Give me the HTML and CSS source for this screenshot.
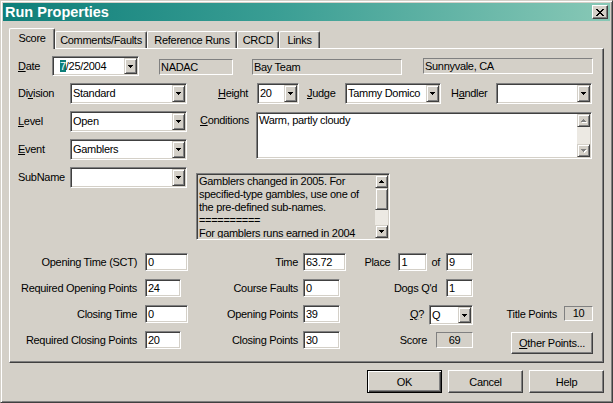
FILE: index.html
```html
<!DOCTYPE html>
<html>
<head>
<meta charset="utf-8">
<title>Run Properties</title>
<link rel="stylesheet" href="styles.css">
</head>
<body>
<div class="window">
  <div class="titlebar">
    <span class="title">Run Properties</span>
    <span class="close"><svg width="8" height="7" shape-rendering="crispEdges"><path d="M0 0h2v1H0zM6 0h2v1H6zM1 1h2v1H1zM5 1h2v1H5zM2 2h4v1H2zM3 3h2v1H3zM2 4h4v1H2zM1 5h2v1H1zM5 5h2v1H5zM0 6h2v1H0zM6 6h2v1H6z"/></svg></span>
  </div>
  <div class="client">
    <div class="tabs">
      <div class="tab active t-score">Score</div>
      <div class="tab t-com">Comments/Faults</div>
      <div class="tab t-ref">Reference Runs</div>
      <div class="tab t-crcd">CRCD</div>
      <div class="tab t-links">Links</div>
    </div>
    <div class="panel">
      <div class="daterow">
        <span class="dlabel"><u>D</u>ate</span>
        <div class="combo h20 w87">
          <span class="ctext dtext"><span class="sel">7</span>/25/2004</span>
          <span class="dd"><svg width="5" height="3" shape-rendering="crispEdges"><path d="M0 0h5v1H0zM1 1h3v1H1zM2 2h1v1H2z"/></svg></span>
        </div>
        <span class="static s-nadac">NADAC</span>
        <span class="static s-club">Bay Team</span>
        <span class="static s-loc">Sunnyvale, CA</span>
      </div>

      <div class="upper">
        <div class="leftcol">
          <div class="frow">
            <span class="flabel">Di<u>v</u>ision</span>
            <div class="combo w117">
              <span class="ctext">Standard</span>
              <span class="dd"><svg width="5" height="3" shape-rendering="crispEdges"><path d="M0 0h5v1H0zM1 1h3v1H1zM2 2h1v1H2z"/></svg></span>
            </div>
          </div>
          <div class="frow">
            <span class="flabel"><u>L</u>evel</span>
            <div class="combo w117">
              <span class="ctext">Open</span>
              <span class="dd"><svg width="5" height="3" shape-rendering="crispEdges"><path d="M0 0h5v1H0zM1 1h3v1H1zM2 2h1v1H2z"/></svg></span>
            </div>
          </div>
          <div class="frow">
            <span class="flabel"><u>E</u>vent</span>
            <div class="combo w117">
              <span class="ctext">Gamblers</span>
              <span class="dd"><svg width="5" height="3" shape-rendering="crispEdges"><path d="M0 0h5v1H0zM1 1h3v1H1zM2 2h1v1H2z"/></svg></span>
            </div>
          </div>
          <div class="frow">
            <span class="flabel">SubName</span>
            <div class="combo w117">
              <span class="ctext"></span>
              <span class="dd"><svg width="5" height="3" shape-rendering="crispEdges"><path d="M0 0h5v1H0zM1 1h3v1H1zM2 2h1v1H2z"/></svg></span>
            </div>
          </div>
        </div>

        <div class="rightcol">
          <div class="hrow">
            <span class="hl-height"><u>H</u>eight</span>
            <div class="combo w42">
              <span class="ctext">20</span>
              <span class="dd"><svg width="5" height="3" shape-rendering="crispEdges"><path d="M0 0h5v1H0zM1 1h3v1H1zM2 2h1v1H2z"/></svg></span>
            </div>
            <span class="hl-judge"><u>J</u>udge</span>
            <div class="combo w96">
              <span class="ctext">Tammy Domico</span>
              <span class="dd"><svg width="5" height="3" shape-rendering="crispEdges"><path d="M0 0h5v1H0zM1 1h3v1H1zM2 2h1v1H2z"/></svg></span>
            </div>
            <span class="hl-handler">H<u>a</u>ndler</span>
            <div class="combo w96">
              <span class="ctext"></span>
              <span class="dd"><svg width="5" height="3" shape-rendering="crispEdges"><path d="M0 0h5v1H0zM1 1h3v1H1zM2 2h1v1H2z"/></svg></span>
            </div>
          </div>
          <div class="crow">
            <span class="clabel"><u>C</u>onditions</span>
            <div class="memo cond">
              <div class="mtext">Warm, partly cloudy</div>
              <div class="sb">
                <span class="sbbtn"><svg width="6" height="4" shape-rendering="crispEdges"><path fill="#fff" d="M3 1h1v1H3zM2 2h3v1H2zM1 3h5v1H1z"/><path fill="#808080" d="M2 0h1v1H2zM1 1h3v1H1zM0 2h5v1H0z"/></svg></span>
                <span class="track"></span>
                <span class="sbbtn"><svg width="6" height="4" shape-rendering="crispEdges"><path fill="#fff" d="M1 1h5v1H1zM2 2h3v1H2zM3 3h1v1H3z"/><path fill="#808080" d="M0 0h5v1H0zM1 1h3v1H1zM2 2h1v1H2z"/></svg></span>
              </div>
            </div>
          </div>
          <div class="memo notes">
            <div class="mtext ntext">Gamblers changed in 2005. For<br>specified-type gambles, use one of<br>the pre-defined sub-names.<br>==========<br>For gamblers runs earned in 2004</div>
            <div class="sb">
              <span class="sbbtn"><svg width="5" height="3" shape-rendering="crispEdges"><path d="M2 0h1v1H2zM1 1h3v1H1zM0 2h5v1H0z"/></svg></span>
              <span class="thumb"></span>
              <span class="track"></span>
              <span class="sbbtn"><svg width="5" height="3" shape-rendering="crispEdges"><path d="M0 0h5v1H0zM1 1h3v1H1zM2 2h1v1H2z"/></svg></span>
            </div>
          </div>
        </div>
      </div>

      <div class="lower">
        <div class="lrow">
          <span class="l1">Opening Time (SCT)</span>
          <span class="c1"><span class="edit w43">0</span></span>
          <span class="l2">Time</span>
          <span class="c2"><span class="edit w43">63.72</span></span>
          <span class="cl"><span class="lab">Place</span><span class="edit w29 ml8">1</span><span class="lab ml4">of</span><span class="edit w27 ml6">9</span></span>
          <span class="tl"></span>
        </div>
        <div class="lrow">
          <span class="l1">Required Opening Points</span>
          <span class="c1"><span class="edit w36">24</span></span>
          <span class="l2">Course Faults</span>
          <span class="c2"><span class="edit w37">0</span></span>
          <span class="cl"><span class="lab">Dogs Q'd</span><span class="edit w27 ml9">1</span></span>
          <span class="tl"></span>
        </div>
        <div class="lrow">
          <span class="l1">Closing Time</span>
          <span class="c1"><span class="edit w43">0</span></span>
          <span class="l2">Opening Points</span>
          <span class="c2"><span class="edit w37">39</span></span>
          <span class="cl"><span class="lab"><u>Q</u>?</span>
            <div class="combo h20 w44 ml5">
              <span class="ctext">Q</span>
              <span class="dd"><svg width="5" height="3" shape-rendering="crispEdges"><path d="M0 0h5v1H0zM1 1h3v1H1zM2 2h1v1H2z"/></svg></span>
            </div>
          </span>
          <span class="tl"><span class="lab">Title Points</span><span class="static num s-title ml7">10</span></span>
        </div>
        <div class="lrow">
          <span class="l1">Required Closing Points</span>
          <span class="c1"><span class="edit w36">20</span></span>
          <span class="l2">Closing Points</span>
          <span class="c2"><span class="edit w37">30</span></span>
          <span class="cl"><span class="lab">Score</span><span class="static num s-score ml9">69</span></span>
          <span class="tl"><span class="btn b-other"><u>O</u>ther Points...</span></span>
        </div>
      </div>
    </div>
    <div class="buttons">
      <span class="btn default">OK</span>
      <span class="btn">Cancel</span>
      <span class="btn">Help</span>
    </div>
  </div>
</div>
</body>
</html>
```

FILE: styles.css
```css
* { box-sizing: border-box; }
html, body { margin: 0; padding: 0; }
body {
  width: 613px;
  height: 403px;
  overflow: hidden;
  background: #d4d0c8;
  font-family: "Liberation Sans", Arial, sans-serif;
  font-size: 11px;
  letter-spacing: -0.3px;
  color: #000;
}
u { text-decoration: underline; text-underline-offset: 1px; }

.window {
  width: 613px;
  height: 403px;
  background: #d4d0c8;
  border: 1px solid;
  border-color: #d4d0c8 #404040 #404040 #d4d0c8;
  box-shadow: inset 1px 1px #fff, inset -1px -1px #808080;
  padding: 2px;
}

.titlebar {
  height: 18px;
  display: flex;
  align-items: center;
  justify-content: space-between;
  padding: 0 2px;
  background: linear-gradient(to right, #0e7e79 0%, #3a9e94 45%, #88c8b6 100%);
}
.title {
  color: #fff;
  font-weight: bold;
  font-size: 14.5px;
  letter-spacing: 0;
  line-height: 18px;
}
.close {
  width: 16px;
  height: 14px;
  background: #d4d0c8;
  border: 1px solid;
  border-color: #fff #404040 #404040 #fff;
  box-shadow: inset -1px -1px #808080;
  display: flex;
  align-items: center;
  justify-content: center;
}

.client { padding: 7px 6px 0 6px; }

.tabs {
  height: 20px;
  display: flex;
  align-items: flex-end;
  position: relative;
  z-index: 2;
}
.tab {
  height: 17px;
  background: #d4d0c8;
  border-top: 1px solid #fff;
  border-left: 1px solid #fff;
  border-right: 1px solid #404040;
  box-shadow: inset -1px 0 #808080;
  border-radius: 2px 2px 0 0;
  padding-top: 2px;
  line-height: 13px;
  text-align: center;
  white-space: nowrap;
}
.tab.active {
  height: 21px;
  margin-bottom: -1px;
  padding-top: 3px;
}
.t-score { width: 46px; }
.t-com { width: 92px; }
.t-ref { width: 90px; }
.t-crcd { width: 42px; }
.t-links { width: 41px; }

.panel {
  height: 315px;
  border: 1px solid;
  border-color: #fff #404040 #404040 #fff;
  box-shadow: inset -1px -1px #808080;
  padding: 7px 8px 0 8px;
}

/* controls */
.combo {
  display: flex;
  height: 21px;
  border: 1px solid;
  border-color: #808080 #fff #fff #808080;
  box-shadow: inset 1px 1px #404040, inset -1px -1px #d4d0c8;
  background: #fff;
  padding: 1px;
}
.combo.h20 { height: 20px; }
.ctext {
  flex: 1;
  padding-left: 1px;
  line-height: 17px;
  white-space: nowrap;
  overflow: hidden;
}
.h20 .ctext { line-height: 16px; }
.dtext { padding-left: 6px; }
.sel { background: #0e7e79; color: #fff; }
.dd {
  width: 13px;
  height: 100%;
  background: #d4d0c8;
  border: 1px solid;
  border-color: #d4d0c8 #404040 #404040 #d4d0c8;
  box-shadow: inset 1px 1px #fff, inset -1px -1px #808080;
  display: flex;
  align-items: center;
  justify-content: center;
}
.w87 { width: 87px; }
.w117 { width: 117px; }
.w42 { width: 42px; }
.w96 { width: 96px; }
.w44 { width: 44px; }

.static {
  display: block;
  height: 16px;
  border: 1px solid;
  border-color: #808080 #fff #fff #808080;
  padding-left: 1px;
  line-height: 14px;
  white-space: nowrap;
}
.static.num { text-align: center; padding-left: 0; }

.edit {
  display: block;
  height: 18px;
  border: 1px solid;
  border-color: #808080 #fff #fff #808080;
  box-shadow: inset 1px 1px #404040, inset -1px -1px #d4d0c8;
  background: #fff;
  padding: 0 2px;
  line-height: 16px;
  white-space: nowrap;
}
.w43 { width: 43px; }
.w36 { width: 36px; }
.w37 { width: 37px; }
.w29 { width: 29px; }
.w27 { width: 27px; }

.ml4 { margin-left: 4px; }
.ml5 { margin-left: 5px; }
.ml6 { margin-left: 6px; }
.ml7 { margin-left: 7px; }
.ml8 { margin-left: 8px; }
.ml9 { margin-left: 9px; }

/* date row */
.daterow {
  display: flex;
  align-items: flex-start;
  height: 20px;
}
.dlabel { width: 34px; line-height: 20px; }
.s-nadac { width: 74px; margin: 3px 0 0 20px; }
.s-club { width: 150px; margin: 3px 0 0 19px; }
.s-loc { width: 170px; margin: 2px 0 0 21px; }

/* upper */
.upper {
  display: flex;
  margin-top: 7px;
  height: 157px;
}
.leftcol {
  width: 169px;
  display: flex;
  flex-direction: column;
  gap: 7px;
}
.frow { display: flex; }
.flabel { width: 52px; line-height: 21px; }

.rightcol {
  width: 396px;
  margin-left: 9px;
}
.hrow { display: flex; height: 21px; }
.hl-height { width: 61px; text-align: right; padding-right: 9px; line-height: 21px; }
.hl-judge { width: 46px; padding-left: 8px; line-height: 21px; }
.hl-handler { width: 55px; padding-left: 10px; line-height: 21px; }

.crow { display: flex; margin-top: 8px; }
.clabel { width: 60px; padding-left: 4px; line-height: 13px; padding-top: 2px; }

.memo {
  display: flex;
  border: 1px solid;
  border-color: #808080 #fff #fff #808080;
  box-shadow: inset 1px 1px #404040, inset -1px -1px #d4d0c8;
  padding: 1px;
  overflow: hidden;
}
.cond { width: 336px; height: 47px; background: #fff; }
.notes { width: 194px; height: 67px; margin-top: 14px; background: #d4d0c8; }
.mtext {
  flex: 1;
  padding-left: 1px;
  line-height: 13px;
  overflow: hidden;
  white-space: nowrap;
}
.ntext { padding-left: 1px; }
.sb {
  width: 13px;
  display: flex;
  flex-direction: column;
}
.sbbtn, .thumb {
  display: flex;
  align-items: center;
  justify-content: center;
  width: 13px;
  height: 13px;
  background: #d4d0c8;
  border: 1px solid;
  border-color: #d4d0c8 #404040 #404040 #d4d0c8;
  box-shadow: inset 1px 1px #fff, inset -1px -1px #808080;
  flex: none;
}
.thumb { height: 22px; }
.track {
  flex: 1;
  background: #ece9e3;
}

/* lower */
.lower { margin-top: 13px; }
.lrow {
  display: flex;
  align-items: flex-start;
  height: 26px;
}
.l1 { width: 127px; text-align: right; padding-right: 8px; line-height: 18px; white-space: nowrap; }
.c1 { width: 45px; }
.l2 { width: 113px; text-align: right; padding-right: 5px; line-height: 18px; white-space: nowrap; }
.c2 { width: 43px; }
.cl { width: 127px; display: flex; justify-content: flex-end; align-items: flex-start; }
.tl { width: 120px; display: flex; justify-content: flex-end; align-items: flex-start; }
.lab { line-height: 18px; white-space: nowrap; }
.s-title { width: 29px; height: 15px; line-height: 13px; margin-top: 1px; }
.s-score { width: 37px; height: 16px; line-height: 14px; margin-top: 1px; }

/* buttons */
.btn {
  display: flex;
  align-items: center;
  justify-content: center;
  width: 75px;
  height: 23px;
  background: #d4d0c8;
  border: 1px solid;
  border-color: #fff #404040 #404040 #fff;
  box-shadow: inset -1px -1px #808080;
  white-space: nowrap;
}
.btn.default {
  border: 1px solid #000;
  box-shadow: inset 1px 1px #fff, inset -1px -1px #404040, inset -2px -2px #808080;
}
.b-other { width: 82px; height: 22px; margin-top: 1px; }
.buttons {
  display: flex;
  justify-content: flex-end;
  gap: 6px;
  margin-top: 7px;
}
```
